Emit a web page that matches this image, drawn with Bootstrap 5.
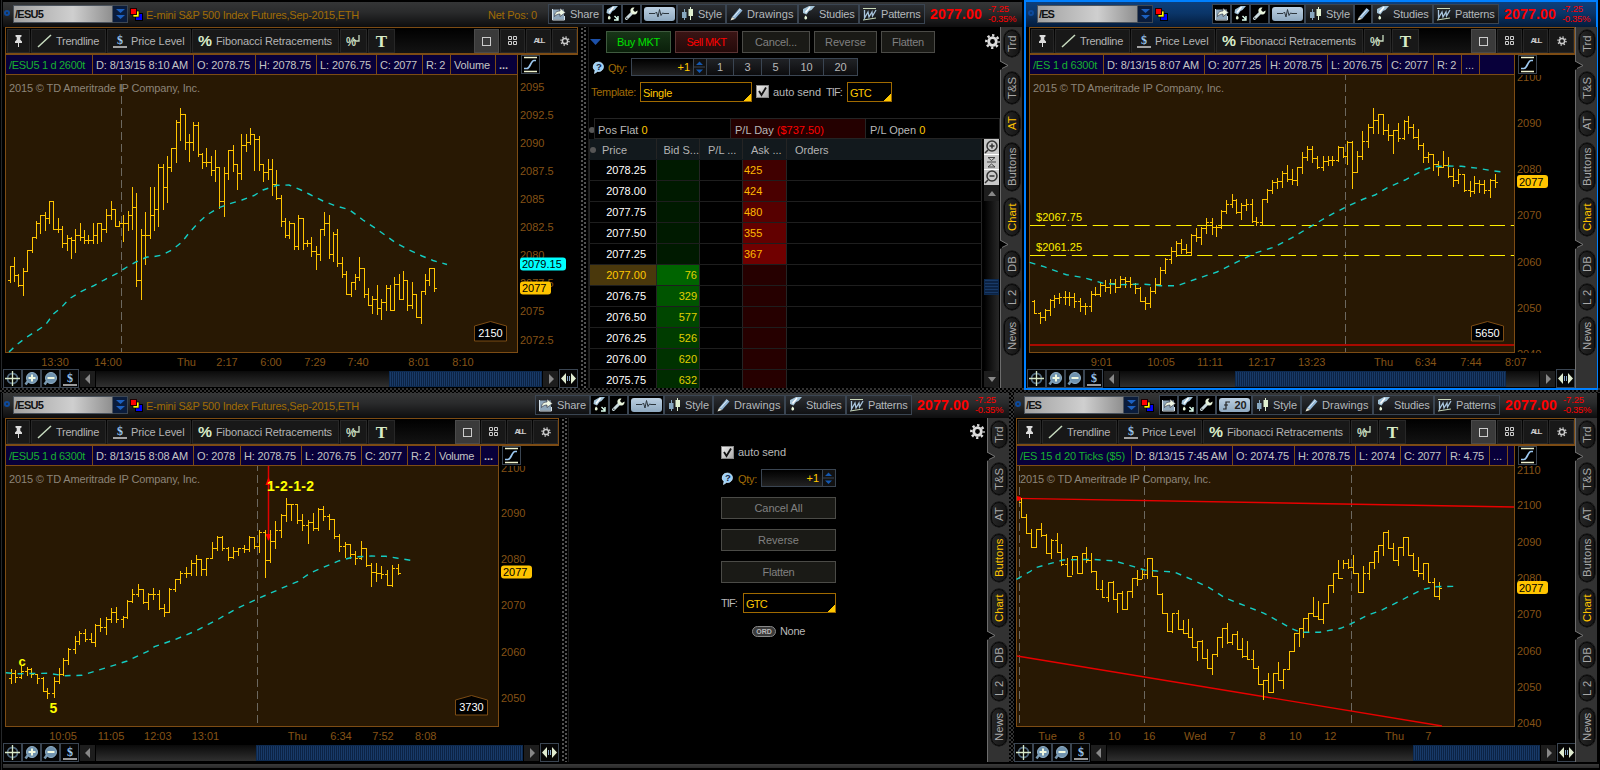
<!DOCTYPE html>
<html lang="en">
<head>
<meta charset="utf-8">
<title>Futures workspace</title>
<link rel="stylesheet" href="https://cdn.jsdelivr.net/npm/bootstrap@5.3.0/dist/css/bootstrap.min.css">
<style>
html,body{height:770px;overflow:hidden}
body{background:#000;color:#b8b8b8;font:11px/14px "Liberation Sans",Arial,sans-serif;width:1600px}
#desk{width:1600px;height:770px;background:linear-gradient(90deg,#000 1px,#26282a 1px,#26282a 2px,#000 2px)}
svg{display:block;flex:none}
span,div{white-space:nowrap}
.hatch{background:repeating-conic-gradient(#333 0 25%,#000 0 50%) 0 0/4px 4px}
.rowtop{height:388px}.rowlow{height:369px}
.win{flex:none;background:#000}
.winA{width:1019px;margin-left:3px;padding-top:2px;height:388px}
.winB{width:574px;height:390px;border:2px solid #0080ff;margin-left:2px;position:relative;z-index:2}
.winC{width:1006px;margin-left:3px;height:369px}
.winD{width:583px;height:369px}
.gut{width:5px;flex:none}
.tbar{height:25px;padding-bottom:2px;background:linear-gradient(#353637,#2a2b2c 40%,#0d0d0e);flex:none}
.winB .tbar{background:linear-gradient(#0c3f7c,#0a3568 45%,#041b3a)}
.ring{width:6px;height:6px;border:2px solid #0d4a9c;border-radius:50%;flex:none;margin:0 3px 2px 1px}
.sym{height:18px;background:linear-gradient(90deg,#a2a2a2,#cfcfcf 60%,#8f8f8f);border:1px solid #4a525c;color:#111;padding:2px 0 0 1px;font-weight:700;line-height:13px;flex:none;margin-top:1px}
.symdd{width:15px;height:18px;background:#0a1c3c;border:1px solid #3c4652;border-left:0;flex:none;padding:1px;margin-top:1px}
.gold{color:#a06c06}
.tbar .gold{position:relative;top:1px}
.tbtn{height:20px;border:1px solid #3a4552;background:linear-gradient(#2b2e32,#101113);flex:none;padding-left:3px;display:flex;align-items:center;color:#b4b8bc}
.tbtn.ico{background:#000;padding:0;justify-content:center}
.tbtn svg+span{margin-left:4px}
.pulse{width:31px;height:14px;border-radius:3px;background:linear-gradient(#bcd0e2,#8fa9c0);display:flex;align-items:center;justify-content:center;color:#222;font-weight:700;font-size:11px}
.quote{width:97px;padding-left:5px;color:#f00;flex:none}
.quote b{font-size:14px;display:inline-block;width:58px}
.quote small{font-size:9.500px;line-height:10px;display:block;padding-top:1px}
.tools{height:28px;border:1px solid #7d4c14;border-bottom-width:2px;background:linear-gradient(#000,#131313);padding:1px 0 1px 1px;gap:1px;flex:none}
.tool{height:24px;background:#181818;border:1px solid #272727;flex:none;display:flex;align-items:center;color:#b4b4b4}
.tool.on{background:#3a3a3a;border-color:#4a4a4a}
.tool.mid{justify-content:center}
.info{height:20px;flex:none}
.cells{background:#08003a;border:1px solid #7d4c14;border-top:0;height:20px;display:flex;flex:none}
.cells>div{border-left:1px solid #7d4c14;padding:3px 0 0 3px;flex:none;color:#c4c4c4}
.cells>div:first-child{border-left:0;color:#18b030}
.curve{width:19px;height:19px;border:1px solid #3a4552;background:#000;margin-left:3px}
.foot{height:19px;flex:none}
.fbtn{width:19px;height:19px;border:1px solid #3a4552;background:#050505;display:flex;align-items:center;justify-content:center;flex:none}
.arr{width:15px;height:16px;background:#1d1d1d;color:#888;display:flex;align-items:center;justify-content:center;flex:none}
.trk{height:16px;background:linear-gradient(#0a0a0a,#303030);flex:none}
.thb{height:16px;background:repeating-linear-gradient(90deg,#183a68 0 1px,#0c2344 1px 2px);border:1px solid #0d2a50;flex:none}
.dots{flex:none;background:radial-gradient(circle,#555 .7px,transparent .9px) 2px 0/4px 4px repeat-y,radial-gradient(circle,#555 .7px,transparent .9px) 5px 2px/4px 4px repeat-y;border-right:1px solid #1c1c1c}
.tabs{background:#323232;border-left:1px solid #6c6c6c;width:22px;flex:none;padding:3px 0 0 3px;position:relative}
.tab{width:16px;border-radius:8px;background:linear-gradient(90deg,#151515,#262626);border:1px solid #080808;box-shadow:0 0 0 .5px #050505;writing-mode:vertical-rl;transform:rotate(180deg);text-align:center;color:#a8a8a8;line-height:14px;font-size:11.3px}
.tab.on{color:#ffc400}
.notch{position:absolute;left:-1px}
.abtn{height:22px;border:1px solid #4b4b47;background:#1a1a16;color:#808080;display:flex;align-items:center;justify-content:center;flex:none}
.buy{background:linear-gradient(#173517,#0a1f0a);color:#00e000;border-color:#3f5a3f}
.sell{background:linear-gradient(#3a1414,#240a0a);color:#f00;border-color:#5a3434}
.num{height:18px;border:1px solid #3a4552;border-left:0;background:linear-gradient(#202226,#0c0c0e);display:flex;align-items:center;justify-content:center;flex:none}
.qin{height:18px;border:1px solid #3a4552;background:linear-gradient(#000,#222);color:#ffc800;text-align:right;line-height:17px;padding-right:3px;flex:none}
.spin{height:18px;width:13px;border:1px solid #3a4552;border-left:0;background:#111;flex:none}
.sel{border:1px solid #a06a00;color:#ffc800;background:linear-gradient(315deg,#ffc800 0 5px,#000 5px);line-height:20px;padding-left:2px;flex:none;height:20px}
.chk{width:13px;height:13px;background:linear-gradient(135deg,#eee,#aaa);border:1px solid #888;flex:none}
.pl{height:21px;border:1px solid #242424;flex:none;margin-left:5px}
.pl>div{flex:none;border-left:1px solid #242424;padding:4px 0 0 4px;width:135px}
.pl>div:first-child{border-left:0;padding-left:3px}
.y{color:#ffc800}
.lrow{height:21px;flex:none;border-bottom:1px solid #1e1e1e;display:flex;line-height:20px;color:#fff}
.lrow>div{flex:none;border-right:1px solid #242424}
.lrow>.c1{width:68px;border-left:1px solid #242424;text-align:right;padding-right:10px}
.lrow>.c2{width:43px;text-align:right;padding-right:2px;color:#e0d000}
.lrow>.c3{width:43px}.lrow>.c4{width:44px;color:#ffb800;padding-left:1px}.lrow>.c5{width:195px}
.lrow.hd{background:#12191d;color:#b4b4b4;border-bottom-color:#12191d;line-height:22px}
.vsb{width:15px;flex:none;background:linear-gradient(90deg,#000,#282828)}
</style>
</head>
<body>
<div id="desk" class="d-flex flex-column"></div>
<script src="https://cdn.jsdelivr.net/npm/bootstrap@5.3.0/dist/js/bootstrap.bundle.min.js"></script>
<script>
// text with a fixed advance width
const T=(s,w,c='')=>`<span class="${c}" data-w="${w}">${s}</span>`;
const S=(w,h,b,vb)=>`<svg width="${w}" height="${h}" viewBox="${vb||`0 0 ${w} ${h}`}">${b}</svg>`;
const I={
 share:S(14,14,'<path d="M1 2.500h11v10H1z" fill="#8ea6ba"/><path d="M.5 2v11h12V9" fill="none" stroke="#d6e2ea"/><path d="M2.500 9.500C2.500 5 5.500 4 8 4V1l5.500 4.500L8 9.500V7C6 7 4.500 7.500 2.500 9.500z" fill="#eef6e4" stroke="#223" stroke-width=".6"/>'),
 funnel:S(15,16,'<path d="M2 3.500 8 0h5L9.500 4 7.500 5 5 8.500 1.500 7z" fill="#a4c4d8"/><path d="M8.500 1 4 6.500" stroke="#fff" stroke-width="1.500"/><path d="M4 9.500c-3.500 4.500 2.500 5.500 1.500 1.500z" fill="#e6f4d8"/><path d="M9.500 10l3.500 3.500m0-3.500v4H9" stroke="#dfe" stroke-width="1.400" fill="none"/>'),
 study:S(13,16,'<path d="M1 3 7 0h6L9.500 4 7 5 4.500 8.500 1 7z" fill="#a4c4d8"/><path d="M8 1 3.500 6.500" stroke="#fff" stroke-width="1.500"/><path d="M3.500 9.500c-3.500 4.500 2.500 5.500 1.500 1.500z" fill="#e6f4d8"/>'),
 wrench:S(15,15,'<path d="M2.500 12.500 8 7" stroke="#c8d8dc" stroke-width="3" stroke-linecap="round"/><path d="M13.500 4.500 11 6 9 4l1.500-2.500C7 1 5.500 4 7 6.500l1.500 1.500c3 1.500 5.500-.5 5-3.500z" fill="#e8f4dc"/><circle cx="2.800" cy="12.200" r=".8" fill="#333"/>'),
 pulse:S(20,11,'<path d="M0 5.500h6l1.500-1.500 1.500 5 1.500-7.500L12 7.500l1.500-2.500 1.500.5h5" fill="none" stroke="#2c363e"/>'),
 style:S(13,14,'<path d="M3.500 2v11" stroke="#88a8c0"/><rect x="1" y="5" width="4.500" height="6" fill="#88a8c0"/><path d="M9.500 0v13" stroke="#e0f0d0"/><rect x="7.500" y="2" width="4.500" height="7" fill="#e0f0d0"/>'),
 pencil:S(13,14,'<path d="M2 10 9.500 1l3 2.500L5 12z" fill="#90b4d4"/><path d="M3.500 10 10.500 2" stroke="#e4f0f8"/><path d="M2 10 0.500 13.500 5 12z" fill="#e8e8d8"/>'),
 pat:S(14,14,'<path d="M0 1.500h13M0 13 13 11" stroke="#c8d8b8"/><path d="M1.500 3v8L5 5l1 5 3-5 .5 4L13 3" fill="none" stroke="#a8c4dc" stroke-width="1.300"/>'),
 sq:S(13,13,'<rect x="5.500" y="5.500" width="7" height="7" fill="#00f" stroke="#000"/><rect x="3" y="3" width="6" height="6" fill="#ff0" stroke="#000" stroke-width=".7"/><rect x=".5" y=".5" width="6" height="6" fill="#f00" stroke="#200"/>'),
 dd:S(12,14,'<path d="M2 2h9L6.500 6zM2 8h9l-4.500 4z" fill="#1c60c0"/>'),
 pin:S(9,14,'<path d="M1.500 1h6v1.500l-1.200.7v2.600L8 7.500V9H1V7.500l1.700-1.700V3.200L1.500 2.500z" fill="#ddd"/><path d="M4.500 9v4" stroke="#ddd"/>'),
 line:S(15,14,'<path d="M1 13 14 1" stroke="#c8dcc0" stroke-width="1.500"/>'),
 dollar:S(14,14,'<text x="7" y="10" text-anchor="middle" font-size="12" font-weight="700" font-family="Liberation Serif" fill="#9cc8f0">$</text><path d="M0 13h14" stroke="#eee" stroke-width="1.300"/>'),
 pct:S(14,13,'<text x="0" y="11" textLength="14" lengthAdjust="spacingAndGlyphs" font-size="14" font-weight="700" font-family="Liberation Sans" fill="#d8ecc8">%</text>'),
 pct2:S(15,14,'<text x="0" y="12" textLength="10" lengthAdjust="spacingAndGlyphs" font-size="12" font-weight="700" font-family="Liberation Sans" fill="#c8dcc0">%</text><path d="M7 4.500l3 2.500h3V1" fill="none" stroke="#c8dcc0" stroke-width="1.300"/>'),
 T:S(13,18,'<text x="6.500" y="14.500" text-anchor="middle" font-size="17" font-weight="700" font-family="Liberation Serif" fill="#d8ecc8">T</text>'),
 one:S(9,9,'<rect x=".5" y=".5" width="8" height="8" fill="none" stroke="#ccc"/>'),
 four:S(10,10,'<path d="M.5.5h3v3h-3zM5.500.5h3v3h-3zM.5 5.500h3v3h-3zM5.500 5.500h3v3h-3z" fill="none" stroke="#ccc"/>'),
 gear:S(10,10,'<circle r="2.600" cx="5" cy="5" fill="none" stroke="#ccc" stroke-width="1.500"/><circle r="4" cx="5" cy="5" fill="none" stroke="#ccc" stroke-width="1.500" stroke-dasharray="1.300 1.840"/>'),
 big:S(15,15,'<circle r="3.800" cx="7.500" cy="7.500" fill="none" stroke="#ddd" stroke-width="2.800"/><circle r="6.200" cx="7.500" cy="7.500" fill="none" stroke="#ddd" stroke-width="2.400" stroke-dasharray="2.300 2.570" stroke-dashoffset="1.150"/>'),
 curve:S(17,17,'<path d="M2 1.500h13M2 15.500h13" stroke="#f0f4d0" stroke-width="1.300"/><path d="M2 12.500h3c3 0 4-8 7-8h2" fill="none" stroke="#9cc8f0" stroke-width="1.700"/>'),
 cross:S(15,15,'<circle cx="7.500" cy="7.500" r="5" fill="none" stroke="#50687c" stroke-width="1.800"/><path d="M7.500 0v15M0 7.500h15" stroke="#d8e8c8" stroke-width="1.300"/>'),
 zin:S(15,15,'<path d="M4 10 1.500 13.500" stroke="#7898b0" stroke-width="2.500"/><circle cx="8" cy="7" r="5.500" fill="#6f92ae" stroke="#90b0c8"/><path d="M8 3.500v7M4.500 7h7" stroke="#f0f8e0" stroke-width="2"/>'),
 zout:S(15,15,'<path d="M4 10 1.500 13.500" stroke="#7898b0" stroke-width="2.500"/><circle cx="8" cy="7" r="5.500" fill="#6f92ae" stroke="#90b0c8"/><path d="M4.500 7h7" stroke="#f0f8e0" stroke-width="2"/>'),
 fit:S(15,13,'<path d="M5 1v11L0 6.500zM10 1v11l5-5.500z" fill="#e0ecd0"/><path d="M6.500 4v5M8.500 4v5" stroke="#88a8c8"/>'),
 help:S(13,13,'<path d="M6.500 1a5 4.800 0 1 1-1 9.500L2.500 12.500 3 9.500A5 4.800 0 0 1 6.500 1z" fill="#9cd0f8" stroke="#d0ecff" stroke-width=".7"/><text x="6.800" y="9.300" text-anchor="middle" font-size="9.500" font-weight="700" fill="#102040" font-family="Liberation Sans">?</text>'),
 ck:S(11,11,'<path d="M2 5l2.500 4L9 1.500" fill="none" stroke="#111" stroke-width="1.800"/>'),
 spin:S(11,16,'<path d="M2 6h7L5.500 2.500zM2 10.500h7L5.500 14z" fill="#1458b0"/><path d="M0 8h11" stroke="#3a4552"/>')
};
const tb=(w,i,t,tw)=>`<div class="tbtn ${t?'':'ico'}" style="width:${w}px">${I[i]||i}${t?T(t,tw):''}</div>`;
function titlebar(o){
 const b={share:o.full?tb(55,'share','Share',29):tb(19,'share'),
  draw:o.noDraw?tb(18,'pencil'):tb(72,'pencil','Drawings',46.5)};
 return `<div class="tbar d-flex align-items-center"><div class="ring" style="margin-left:${o.ring}px"></div>
 <div class="sym" style="width:${o.sw}px">${T(o.sym,o.symw)}</div><div class="symdd">${I.dd}</div><div style="margin:1px 3px 0 2px">${I.sq}</div>
 ${o.title?T(o.title,213,'gold'):''}<div class="ms-auto d-flex align-items-center">${o.net?`<span style="margin-right:11px">${T('Net Pos: 0',49,'gold')}</span>`:''}
 ${b.share}${tb(19,'funnel')}${tb(19,'wrench')}<div class="tbtn ico" style="width:36px"><div class="pulse">${o.p20?'<svg width="9" height="10"><path d="M1 9h3V2h4M2 5h4" fill="none" stroke="#222" stroke-width="1.200"/></svg>'+T('20',12):I.pulse}</div></div>
 ${tb(49,'style','Style',24)}${b.draw}${tb(61,'study','Studies',35.5)}${tb(66,'pat','Patterns',39.500)}
 <div class="quote d-flex align-items-center"><b>${T('2077.00',52)}</b><small>${T('-7.25',21)}<br>${T('-0.35%',28)}</small></div></div></div>`;
}
const tools=(ml,w)=>{
 const x=(w,b,m='')=>`<div class="tool ${m}" style="width:${w}px">${b}</div>`;
 return `<div class="tools d-flex" style="margin-left:${ml}px;width:${w}px">
 ${x(23,I.pin,'mid')}${x(75,`<span style="margin:0 4px 0 5px">${I.line}</span>${T('Trendline',43)}`)}
 ${x(84,`<span style="margin:0 4px 0 5px">${I.dollar}</span>${T('Price Level',53.5)}`)}${x(147,`<span style="margin:0 4px 0 5px">${I.pct}</span>${T('Fibonacci Retracements',116)}`)}
 ${x(27,I.pct2,'mid')}${x(27,I.T,'mid')}<div class="ms-auto d-flex" style="gap:1px">${x(25,I.one,'mid on')}${x(25,I.four,'mid')}${x(25,'<b style="font-size:8px;color:#ccc">'+T('ALL',10)+'</b>','mid')}${x(25,I.gear,'mid')}</div></div>`;
};
// cells: [width, text, text width]
const info=(ml,c)=>`<div class="info d-flex" style="padding-left:${ml}px"><div class="cells">${c.map(k=>`<div style="width:${k[0]}px">${k[1]?T(k[1],k[2]):''}</div>`).join('')}</div><div class="curve">${I.curve}</div></div>`;
const foot=(ml,t1,th,t2)=>`<div class="foot d-flex align-items-center" style="padding-left:${ml}px">${['cross','zin','zout','dollar'].map(k=>`<div class="fbtn">${I[k]}</div>`).join('')}
 <div class="arr" style="margin:0 1px">${S(6,10,'<path d="M5 0v10L0 5z" fill="#888"/>')}</div><div class="trk" style="width:${t1}px"></div><div class="thb" style="width:${th}px"></div>${t2?`<div class="trk" style="width:${t2}px"></div>`:''}
 <div class="arr" style="margin:0 1px">${S(6,10,'<path d="M1 0v10l5-5z" fill="#888"/>')}</div><div class="fbtn">${I.fit}</div></div>`;
const tabs=on=>`<div class="tabs">${[['Trd',27,0],['T&amp;S',32,15],['AT',25,7],['Buttons',48,7],['Chart',38,7],['DB',26,15],['L 2',26,7],['News',38,7]].map(t=>`<div class="tab ${on.includes(t[0])?'on':''}" style="height:${t[1]}px;margin-top:${t[2]}px">${t[0]}</div>`).join('')}
 ${[34,213].map(y=>`<svg class="notch" style="top:${y}px" width="9" height="10"><path d="M0 0l8 4.500L0 9z" fill="#000"/><path d="M0 0l8 4.500-6 3" stroke="#777" fill="none"/></svg>`).join('')}</div>`;

function chart(c){
 let s='',r=Math.round;
 const [L,TOP,R,B]=c.plot;
 s+=`<rect x="${L+.5}" y="${TOP-1}" width="${R-L}" height="${B-TOP+1.5}" fill="#281803" stroke="#7d4c14"/>`;
 c.v.forEach(x=>s+=`<path d="M${r(x)+.5} ${TOP}V${B}" stroke="#6c6860" stroke-dasharray="8 4" stroke-dashoffset="3"/>`);
 s+=`<text x="${L+4}" y="${TOP+17}" fill="#8c8478" textLength="191">2015 © TD Ameritrade IP Company, Inc.</text>`;
 s+=c.under||'';
 let open=c.open,d='';
 c.segs.forEach(g=>g.b.forEach(([X,h,l,cl])=>{
  const x=r(g.k?c.ox+X/g.k:X),f=v=>r(g.k?g.y+v/3:v)+.5;
  const o=typeof open==='number'?r(open-.5)+.5:f(cl);
  d+=`M${x+.5} ${f(h)-.5}V${f(l)+.5}M${x-2} ${o}H${x}M${x} ${f(cl)}H${x+3}`;open=f(cl);
 }));
 s+=`<path d="${d}" stroke="#ffc400" fill="none" shape-rendering="crispEdges"/>`;
 const m=c.ma.flatMap(g=>g.p.map(([x,y])=>g.k?[(c.ox+x/g.k).toFixed(1),(g.y+y/3).toFixed(1)]:[x,y]));
 s+=`<path d="M${m.map(p=>p.join(' ')).join('L')}" fill="none" stroke="#14ccc2" stroke-width="1.400" stroke-dasharray="6 5.800"/>`;
 s+=c.over||'';
 c.yt.forEach(([t,y])=>s+=`<text x="${c.tx}" y="${y+4}" fill="#855316">${t}</text>`);
 s+=`<rect x="${L}" y="${B+1}" width="${R-L+60}" height="18" fill="#000"/>`;
 c.xt.forEach(([t,x])=>s+=`<text x="${x}" y="${B+14}" text-anchor="middle" fill="#855316">${t}</text>`);
 c.bub.forEach(([t,y,w,col])=>s+=`<rect x="${c.tx}" y="${y-6.5}" width="${w}" height="13" rx="3" fill="${col}"/><text x="${c.tx+2}" y="${y+4}" fill="#000">${t}</text>`);
 if(c.badge){const [t,x,y]=c.badge;s+=`<path d="M${x+.5} ${y+20}V${y+5}L${x+16.5} ${y+.5} ${x+32.500} ${y+5}V${y+20}z" fill="#000" stroke="#7d4c14"/><text x="${x+16.5}" y="${y+16}" text-anchor="middle" fill="#fff">${t}</text>`;}
 return `<svg width="${c.w}" height="${c.h}" viewBox="${c.x} ${c.y} ${c.w} ${c.h}" font-size="11" font-family="Liberation Sans">${s}</svg>`;
}
const cA=chart({x:3,y:75,w:575,h:294,plot:[5,75,517,352],tx:520,v:[121],open:280.5,
 yt:[['2095',87],['2092.5',115],['2090',143],['2087.5',171],['2085',199],['2082.5',227],['2080',255],['2077.5',283],['2075',311],['2072.5',340]],
 xt:[['13:30',55],['14:00',108],['Thu',186.5],['2:17',227],['6:00',271],['7:29',315],['7:40',358],['8:01',419],['8:10',463]],
 bub:[['2079.15',264,46,'#0ff'],['2077',288,31,'#ffc400']],badge:['2150',474,321],
 segs:[{b:[[10,266,282,266],[14,257,281,275],[18,274,286,285],[23,268,295,271],[27,250,271,250],[32,237,252,237],[36,221,238,223],[40,215,233,215],[45,212,230,218],[49,201,223,201],[53,201,229,229],[58,218,232,229],[62,226,247,243],[67,235,250,238],[71,237,258,240],[75,229,252,235],[80,223,240,237],[84,230,243,240],[88,235,243,240],[93,223,243,235],[97,223,243,223],[101,223,241,229],[106,209,232,215],[111,201,219,209],[115,209,226,226],[119,221,226,223],[123,215,241,223],[128,211,230,215],[132,187,229,207],[136,193,286,280],[141,229,299,235],[145,212,264,235],[150,187,238,215],[154,187,230,209],[158,164,226,167],[163,164,209,187],[167,156,202,167],[171,148,171,148],[176,120,162,122],[180,108,140,114],[185,114,149,142],[189,134,161,142],[193,122,150,125],[198,122,156,154],[202,153,168,162],[206,148,166,162],[211,156,175,170],[215,150,181,167],[219,167,208,201],[224,167,216,173],[228,150,179,150],[233,145,171,164],[237,164,189,173],[241,134,179,145],[246,134,151,142],[250,128,144,134],[254,134,170,139],[259,136,170,164],[263,164,181,172],[268,159,179,169],[272,159,195,184],[276,170,199,198],[281,195,226,221],[285,218,237,235],[289,221,238,223],[294,223,249,246],[298,215,249,218],[303,218,249,243],[307,240,246,243],[311,237,256,251],[316,246,269,254],[320,229,260,229],[324,212,235,223],[329,215,258,254],[333,232,261,234],[337,229,266,263],[342,257,277,274],[346,271,294,294],[351,282,296,282],[355,274,289,277],[359,257,280,268],[364,268,297,294],[368,288,305,305],[372,296,313,299],[377,285,314,308],[381,299,319,302],[386,285,310,288],[390,285,310,310],[394,277,310,284],[399,274,299,299],[403,271,299,280],[407,280,310,305],[412,282,308,294],[416,294,317,317],[421,291,323,291],[425,274,294,280],[429,268,285,268],[434,268,291,288]]}],
 ma:[{p:[[9,352],[16.4,345],[25.4,338],[36.4,331],[45.4,325],[53.4,314],[61.8,307],[69,299],[82,291],[93,286],[104,280],[116,274],[127,267],[136,262],[147,257],[152,257],[162,255],[172,250],[182,242],[189,233],[198,223],[207,215],[218,208],[229,204],[242,200],[254,195.500],[263,190],[277,185.300],[289,185],[301,190],[309,194],[323,201],[336,206],[349,209.500],[363,220],[378,230],[389,238],[396,243],[409,250],[422,256],[433,260.500],[447,264.500]]}]});
const cB=chart({x:1026,y:75,w:549,h:294,plot:[1029,75,1514,352],ox:1010,tx:1517,v:[1345],open:301.5,
 yt:[['2100',77],['2090',123],['2080',169],['2070',215],['2060',262],['2050',308],['2040',354]],
 xt:[['9:01',1101.4],['10:05',1161],['11:11',1210],['12:17',1261.7],['13:23',1311.7],['Thu',1383.6],['6:34',1425.7],['7:44',1471],['8:07',1515.6]],
 bub:[['2077',181.5,31,'#ffc400']],badge:['5650',1471,321],
 under:'<path d="M1030 225.500H1514M1030 255.500H1514" stroke="#fff000" stroke-dasharray="15.200 5.700"/><path d="M1030 345H1514" stroke="#a80a00" stroke-width="2"/><g fill="#fff000"><text x="1036" y="221" textLength="46">$2067.75</text><text x="1036" y="251" textLength="46">$2061.25</text></g>',
 segs:[{k:2.658,y:190,b:[[65,331,368,368],[79,365,398,382],[92,358,391,361],[105,328,374,331],[118,315,350,325],[131,310,338,322],[145,304,341,322],[157,307,346,322],[171,310,350,334],[186,325,364,349],[200,340,373,349],[214,304,362,313],[227,292,316,313],[240,277,317,285],[253,271,304,292],[266,268,308,280],[280,268,305,292],[293,259,292,268],[305,262,290,274],[319,262,292,283],[333,280,308,295],[346,292,334,334],[360,322,356,340],[373,292,350,304],[386,265,308,283],[400,232,286,241],[413,205,250,208],[427,170,218,184],[442,154,197,160],[455,147,188,178],[469,163,188,187],[482,133,196,136],[495,115,154,142],[509,112,161,115],[522,85,128,97],[536,84,131,112],[548,106,139,112],[562,61,115,63],[575,30,70,42],[589,12,52,30],[602,28,70,67],[615,40,86,45],[628,26,60,43],[642,28,95,93],[655,80,106,95],[669,26,104,28]]},
 {k:2.658,y:0,b:[[682,567,606,570],[696,541,579,547],[710,534,565,544],[724,514,560,520],[737,495,543,538],[750,507,553,540],[764,500,555,502],[777,456,520,472],[790,438,480,446],[803,438,485,475],[817,469,505,502],[831,469,510,484],[844,468,495,480],[857,468,495,480],[871,438,484,442],[884,442,472,468],[897,424,492,427],[910,423,563,515],[923,454,517,467],[936,394,476,424],[951,372,440,381],[966,324,400,360],[979,343,400,343],[992,343,403,391],[1005,372,420,405],[1019,391,459,390],[1032,369,424,415],[1046,360,417,362],[1058,348,400,382],[1072,372,415,412],[1085,387,446,436],[1099,430,487,470],[1112,456,486,462],[1125,462,509,493],[1138,483,525,500],[1152,454,500,494],[1165,472,531,527],[1178,505,559,541],[1192,508,550,523],[1206,522,573,571],[1222,544,588,574],[1233,529,580,550],[1247,540,575,552],[1261,540,580,571],[1275,538,590,541],[1288,522,562,547]]}],
 ma:[{k:2.658,y:190,p:[[52,217],[90,230],[150,254],[200,264],[245,279],[290,284],[350,282],[400,287],[445,287],[495,267],[550,246],[600,218],[650,190],[700,172],[750,143],[800,109],[850,76],[900,47],[940,27]]},{k:2.658,y:0,p:[[970,585],[1000,565],[1050,540],[1100,510],[1125,500],[1160,498],[1200,499],[1245,505],[1280,512],[1315,517]]}]});
const cC=chart({x:3,y:466,w:556,h:277,plot:[5,466,498,726],ox:0,tx:501,v:[257],open:678.5,
 yt:[['2100',467.5],['2090',513],['2080',559],['2070',605],['2060',652],['2050',698]],
 xt:[['10:05',63],['11:05',111],['12:03',157.8],['13:01',205.4],['Thu',297.3],['6:34',341],['7:52',383],['8:08',425.7]],
 bub:[['2077',572,31,'#ffc400']],badge:['3730',455,695],
 under:'<path d="M268.500 466V540" stroke="#e00000" stroke-width="1.500"/><path d="M268.500 477l3 8h-6zM268.500 541l3-7h-6z" fill="#f00"/>',
 over:'<g fill="#ff0" font-weight="700" font-size="14"><text x="267" y="491" textLength="47">1-2-1-2</text><text x="22" y="666" text-anchor="middle" font-size="13">c</text><text x="53.500" y="713" text-anchor="middle">5</text></g>',
 segs:[{k:2.751,y:570,b:[[29,297,338,310],[42,300,335,322],[59,289,323,304],[73,290,316,298],[86,295,320,313],[103,311,338,325],[117,322,364,362],[130,353,385,370],[148,322,380,334],[161,295,338,313],[174,264,315,271],[188,235,282,238],[205,199,248,214],[218,184,223,190],[233,178,212,208],[249,190,217,217],[262,163,227,166],[276,145,184,170],[292,142,191,148],[306,115,157,127],[320,111,155,146],[337,138,170,142],[350,90,145,92],[364,57,97,72],[379,43,78,58],[394,57,99,97],[408,70,116,73],[422,54,88,73],[438,61,117,115],[452,102,137,125],[466,55,125,58],[482,28,62,28]]},
 {k:2.8,y:385,b:[[505,558,594,564],[520,545,577,563],[535,525,570,535],[550,511,570,522],[564,522,569,553],[578,522,570,520],[594,472,520,488],[608,454,494,457],[622,454,495,490],[639,485,524,517],[653,487,520,499],[667,488,510,490],[683,480,502,492],[698,453,497,457],[711,456,488,482],[726,436,502,440],[743,436,577,526],[757,436,532,468],[771,408,490,436],[788,387,455,391],[802,339,408,357],[816,357,405,357],[832,357,413,405],[846,387,434,420],[861,405,473,411],[877,384,436,430],[891,369,434,372],[905,363,405,394],[920,387,433,402],[935,402,459,452],[950,446,499,484],[966,471,516,478],[981,478,520,508],[995,498,538,520],[1010,468,522,490],[1026,488,543,540],[1040,535,602,562],[1054,535,588,565],[1068,543,580,568],[1083,555,600,600],[1097,540,604,548],[1113,538,566,563]]}],
 ma:[{k:2.751,y:570,p:[[16,308],[50,311],[130,310],[180,317],[225,316],[290,294],[350,273],[380,257],[405,245],[425,230],[480,209],[540,182],[600,148],[650,116],[709,86],[770,57],[820,34]]},{k:2.8,y:385,p:[[870,563],[910,545],[950,527],[990,516],[1040,513],[1080,514],[1110,519],[1150,526]]}]});
const cD=chart({x:1014,y:466,w:561,h:277,plot:[1016,466,1514,726],ox:1000,tx:1517,v:[1019,1144,1351],open:502.5,
 yt:[['2110',469.5],['2100',505],['2090',542],['2080',578],['2070',614],['2060',651],['2050',687],['2040',723]],
 xt:[['Tue',1047.5],['8',1081.5],['10',1114.4],['16',1149.3],['Wed',1195.2],['7',1232.3],['8',1262.5],['10',1295.4],['12',1330.3],['Thu',1394.6],['7',1428.2]],
 bub:[['2077',587.5,31,'#ffc400']],
 under:'<path d="M1017 498.300 1514 507M1017 656 1442 726" stroke="#e80000" stroke-width="1.300"/><path d="M1017 496l4 1v3l-4 1z" fill="#f00"/>',
 segs:[{k:2.613,y:385,b:[[56,338,395,395],[69,388,445,445],[82,433,487,487],[95,433,487,433],[108,414,453,450],[121,448,505,505],[134,462,518,464],[148,445,500,500],[160,476,540,536],[174,520,573,573],[187,514,566,514],[200,514,563,563],[213,505,563,505],[226,487,530,526],[239,505,560,558]]},
 {k:2.613,y:570,b:[[252,3,57,57],[267,30,82,82],[281,37,94,37],[294,33,88,88],[307,70,125,70],[320,63,118,118],[333,63,118,63],[346,25,80,25],[359,0,45,28],[372,-1,24,13],[385,-35,24,-35],[398,-37,19,19],[411,18,73,73],[424,70,130,130],[437,130,184,184],[450,130,185,130],[464,121,176,176],[477,149,190,190],[490,148,202,202],[502,174,230,230],[516,213,270,213],[529,211,265,265],[542,238,293,293],[555,253,311,253],[568,202,257,202],[581,175,230,175],[594,159,218,217],[607,193,222,193],[620,184,238,238],[633,205,260,259],[646,213,268,268],[660,240,295,295],[673,288,343,343],[686,330,386,330],[701,310,367,367],[714,310,367,310],[727,276,331,331],[740,298,353,298],[754,244,298,244],[767,190,244,190],[780,173,227,173],[793,145,200,145],[806,130,185,130],[819,82,137,137],[832,94,148,148],[845,100,158,100],[858,46,100,46],[871,10,67,10],[884,-30,25,25],[897,-30,-5,-20],[910,-33,-5,-8],[923,-45,10,10],[936,10,67,67],[949,-13,67,10],[963,-25,28,-25],[976,-57,-5,-57],[989,-75,-25,-75],[1002,-113,-45,-113],[1015,-120,-65,-65],[1028,-82,-30,-30],[1041,-70,-15,-70],[1054,-98,-45,-98],[1067,-100,-45,-45],[1080,-50,0,0],[1093,-40,18,10],[1106,-20,28,-20],[1119,-20,37,37],[1135,25,79,79],[1148,37,88,55]]}],
 ma:[{k:2.613,y:570,p:[[43,28],[80,4]]},{k:2.613,y:385,p:[[90,549],[130,536],[165,525],[240,523],[300,528],[350,545],[378,555],[410,558]]},{k:2.613,y:570,p:[[455,6],[500,28],[545,52],[590,85],[640,107],[690,130],[730,155],[760,175],[785,187],[835,187],[890,175],[918,161],[960,136],[1000,119],[1050,90],[1100,60],[1135,50],[1190,49]]}]});

const ladder=[['2078.25','','425','#001a00','#400000'],['2078.00','','424','#001a00','#4a0000'],['2077.75','','480','#001a00','#560000'],['2077.50','','355','#001a00','#620000'],['2077.25','','367','#001a00','#700000'],['2077.00','76','','#006400','#260000'],['2076.75','329','','#005400','#260000'],['2076.50','577','','#004600','#260000'],['2076.25','526','','#003c00','#260000'],['2076.00','620','','#003200','#260000'],['2075.75','632','','#002c00','#260000']];
const dot='<span style="display:inline-block;width:6px;height:6px;border-radius:3px;background:#555;flex:none"></span>';
const at=`<div class="d-flex flex-column overflow-hidden" style="width:411px">
 <div class="d-flex align-items-center" style="height:29px;padding-top:1px;gap:4px;margin-bottom:2px"><span style="width:13px">${S(12,8,'<path d="M1 1h11L6.500 7z" fill="#1c50a8"/>')}</span>
 <div class="abtn buy" style="width:65px">${T('Buy MKT',43)}</div><div class="abtn sell" style="width:63px">${T('Sell MKT',40)}</div><div class="abtn" style="width:68px">${T('Cancel...',42)}</div><div class="abtn" style="width:63px">${T('Reverse',41)}</div><div class="abtn" style="width:54px">${T('Flatten',32)}</div><span class="ms-auto me-0">${I.big}</span></div>
 <div class="d-flex align-items-center" style="height:19px;padding-left:3px">${I.help}<span style="width:26px;padding:1px 0 0 3px">${T('Qty:',19,'gold')}</span><div class="qin" style="width:63px">+1</div><div class="spin">${I.spin}</div>
 ${[['1',27],['3',28],['5',28],['10',34],['20',34]].map(n=>`<div class="num" style="width:${n[1]}px">${n[0]}</div>`).join('')}</div>
 <div class="d-flex align-items-center" style="height:21px;margin-top:5px;padding-left:2px"><span style="width:49px">${T('Template:',45,'gold')}</span><div class="sel" style="width:112px">${T('Single',29)}</div><div class="chk" style="margin:0 4px">${I.ck}</div>${T('auto send',48)}<span style="margin:0 5px 0 5px">${T('TIF:',16)}</span><div class="sel" style="width:45px">${T('GTC',21)}</div></div>
 <div class="d-flex align-items-center" style="margin-top:16px"><div style="width:0">${dot}</div><div class="pl d-flex" style="width:406px"><div>Pos Flat <span class="y">0</span></div><div style="background:#240000">P/L Day <span style="color:#f00">($737.50)</span></div><div>P/L Open <span class="y">0</span></div></div></div>
 <div class="d-flex flex-fill overflow-hidden"><div><div class="lrow hd"><div class="c1 d-flex align-items-center" style="padding-top:2px">${dot}<span style="margin-left:6px">Price</span></div><div class="c2 text-end" style="color:inherit;padding:0">Bid S...</div><div class="c3 ps-2">P/L ...</div><div class="c4 ps-2" style="color:inherit">Ask ...</div><div class="c5 ps-2">Orders</div></div>
 ${ladder.map(r=>`<div class="lrow"><div class="c1" ${r[0]=='2077.00'?'style="background:#4a380c;color:#ffc800"':''}>${r[0]}</div><div class="c2" style="background:${r[3]}">${r[1]}</div><div class="c3"></div><div class="c4" style="background:${r[4]}">${r[2]}</div><div class="c5"></div></div>`).join('')}</div>
 <div class="vsb d-flex flex-column" style="margin-left:2px">${S(15,46,'<rect width="15" height="46" fill="#c8c8c8"/><path d="M0 15.500h15M0 30.500h15" stroke="#fff"/><g fill="none" stroke="#333" stroke-width="1.500"><circle cx="8" cy="7" r="5"/><circle cx="8" cy="37" r="5"/><path d="M4 11l-3 3M4 41l-3 3M5.500 7h5M8 4.500v5M5.500 37h5"/></g><path d="M3 23h9M4 18.500h7l-3.500 3zM4 28h7l-3.500-3z" stroke="#444" fill="none"/>')}
 <div class="arr">${S(8,5,'<path d="M0 5h8L4 0z" fill="#888"/>')}</div><div style="height:78px"></div><div style="height:16px;background:repeating-linear-gradient(#183a68 0 1px,#0c2344 1px 3px);border:1px solid #0d2a50"></div><div class="arr mt-auto" style="margin-bottom:1px">${S(8,5,'<path d="M0 0h8L4 5z" fill="#888"/>')}</div></div></div></div>`;
const btns=`<div class="d-flex justify-content-end" style="width:418px;padding-top:27px"><div class="d-flex flex-column" style="width:115px;margin-right:134px"><div class="d-flex align-items-center" style="height:14px"><div class="chk" style="margin-right:4px">${I.ck}</div>${T('auto send',48)}</div>
 <div class="d-flex align-items-center" style="height:18px;margin-top:10px">${I.help}<span style="width:27px;padding:1px 0 0 4px">${T('Qty:',19,'gold')}</span><div class="qin" style="width:62px">+1</div><div class="spin">${I.spin}</div></div>
 ${[['Cancel All',48],['Reverse',41],['Flatten',32]].map(b=>`<div class="abtn" style="margin-top:10px">${T(b[0],b[1])}</div>`).join('')}
 <div class="d-flex align-items-center" style="margin-top:10px">${T('TIF:',16)}<div class="sel ms-auto" style="width:93px">${T('GTC',21)}</div></div>
 <div class="d-flex align-items-center" style="margin:11px 0 0 31px"><span style="width:24px;height:11px;border:1px solid #888;border-radius:6px;background:#3a3a3a;font:700 7px/9px 'Liberation Sans',sans-serif;text-align:center;margin-right:4px">ORD</span>${T('None',25)}</div></div>
 <div style="margin:-21px 2px 0 0;width:15px">${I.big}</div></div>`;
const win=(cls,o,col,mid,on)=>`<div class="win ${cls} d-flex flex-column">${titlebar(o)}<div class="d-flex flex-fill" style="min-height:0"><div class="d-flex flex-column" style="width:${o.cw}px;flex:none">${col}</div>${mid}${tabs(on)}</div></div>`;
const full='E-mini S&amp;P 500 Index Futures,Sep-2015,ETH';
document.getElementById('desk').innerHTML=
 `<div class="d-flex rowtop">${win('winA',{ring:1,sw:100,sym:'/ESU5',symw:28,title:full,net:1,full:1,cw:575},
  tools(2,573)+info(2,[[86,'/ESU5 1 d 2600t',76],[101,'D: 8/13/15 8:10 AM',92],[62,'O: 2078.75',53],[61,'H: 2078.75',52],[60,'L: 2076.75',51],[46,'C: 2077',37],[28,'R: 2',19],[45,'Volume',36],[22,'<b>...</b>',9]])+cA+foot(0,293,153),
  `<div class="dots" style="width:11px"></div>${at}`,['AT','Chart'])}
 ${win('winB',{ring:2,sw:101,sym:'/ES',symw:15,noDraw:1,cw:549},
  tools(3,546)+info(3,[[73,'/ES 1 d 6300t',64],[101,'D: 8/13/15 8:07 AM',92],[62,'O: 2077.25',53],[61,'H: 2078.75',52],[60,'L: 2076.75',51],[46,'C: 2077',37],[28,'R: 2',19],[18,'...',9],[35,'',0]])+cB+foot(1,115,271,33),'',['Chart'])}</div>
 <div class="hatch flex-shrink-0" style="height:5px"></div>
 <div class="d-flex rowlow">${win('winC',{ring:1,sw:100,sym:'/ESU5',symw:28,title:full,full:1,cw:556},
  tools(2,554)+info(2,[[86,'/ESU5 1 d 6300t',76],[101,'D: 8/13/15 8:08 AM',92],[47,'O: 2078',38],[61,'H: 2078.75',52],[60,'L: 2076.75',51],[46,'C: 2077',37],[28,'R: 2',19],[45,'Volume',35],[18,'<b>...</b>',9]])+cC+foot(0,160,267),
  `<div class="dots" style="width:10px"></div>${btns}`,['Buttons','Chart'])}
 <div class="gut hatch"></div>
 ${win('winD',{ring:1,sw:100,sym:'/ES',symw:15,p20:1,cw:561},
  tools(2,559)+info(2,[[114,'/ES 15 d 20 Ticks ($5)',105],[101,'D: 8/13/15 7:45 AM',92],[62,'O: 2074.75',53],[61,'H: 2078.75',52],[45,'L: 2074',36],[46,'C: 2077',37],[43,'R: 4.75',34],[18,'...',9],[7,'',0]])+cD+foot(0,306,127),'',['Chart'])}</div>
 <div class="flex-shrink-0" style="height:4px;margin:2px 1px 0 3px;background:linear-gradient(#3a3a3a,#2a2a2a)"></div>`;
// spread the letters of each label over its advance width
document.querySelectorAll('[data-w]').forEach(e=>{const n=e.textContent.length,w=e.getBoundingClientRect().width;e.style.letterSpacing=((+e.dataset.w-w)/n).toFixed(3)+'px'});
</script>
</body>
</html>
